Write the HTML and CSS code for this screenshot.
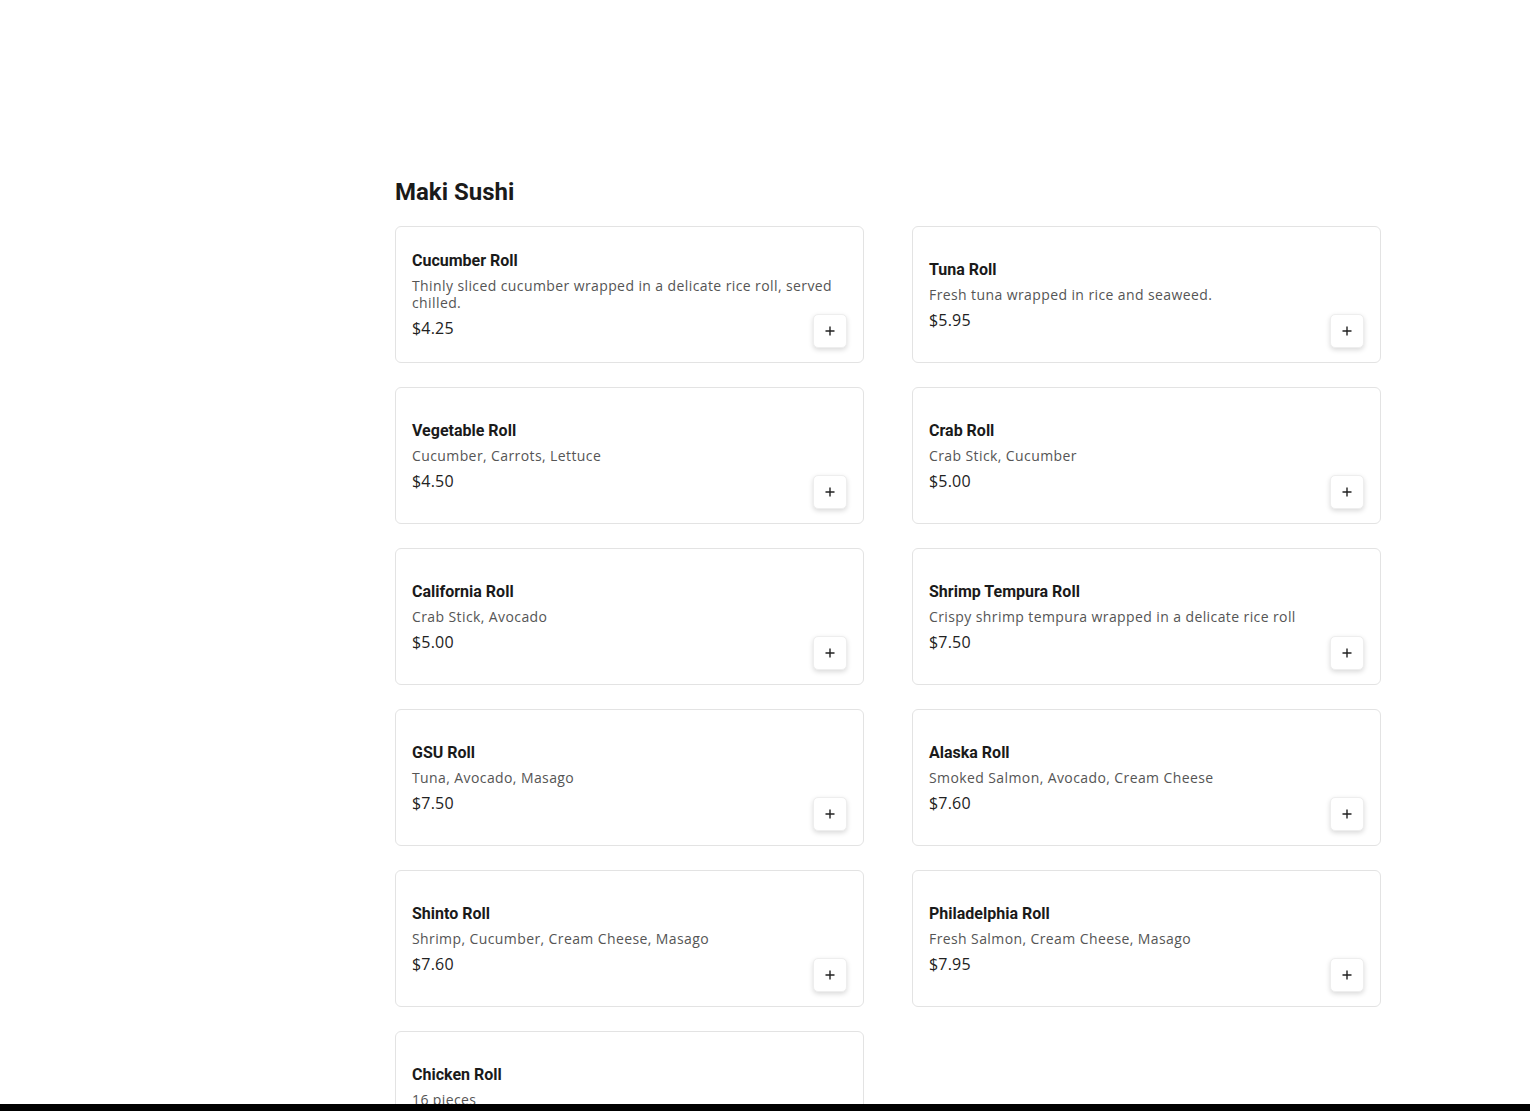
FILE: index.html
```html
<!DOCTYPE html>
<html lang="en">
  <head>
    <meta charset="UTF-8" />
    <meta name="viewport" content="width=device-width, initial-scale=1.0" />
    <title>Maki Sushi</title>
    <link rel="stylesheet" href="styles.css">
  </head>
  <body>
    <main class="menu">
      <section class="menu-section">
        <h2 class="section-title">Maki Sushi</h2>
        <div class="menu-grid">
          <div class="menu-item">
            <div class="item-info">
              <h3 class="item-name">Cucumber Roll</h3>
              <p class="item-desc">Thinly sliced cucumber wrapped in a delicate rice roll, served chilled.</p>
              <p class="item-price">$4.25</p>
            </div>
            <button class="add-btn" aria-label="Add">
              <svg viewBox="0 0 12 12" width="12" height="12"><path d="M6 1.5v9M1.5 6h9" /></svg>
            </button>
          </div>
          <div class="menu-item">
            <div class="item-info">
              <h3 class="item-name">Tuna Roll</h3>
              <p class="item-desc">Fresh tuna wrapped in rice and seaweed.</p>
              <p class="item-price">$5.95</p>
            </div>
            <button class="add-btn" aria-label="Add">
              <svg viewBox="0 0 12 12" width="12" height="12"><path d="M6 1.5v9M1.5 6h9" /></svg>
            </button>
          </div>
          <div class="menu-item">
            <div class="item-info">
              <h3 class="item-name">Vegetable Roll</h3>
              <p class="item-desc">Cucumber, Carrots, Lettuce</p>
              <p class="item-price">$4.50</p>
            </div>
            <button class="add-btn" aria-label="Add">
              <svg viewBox="0 0 12 12" width="12" height="12"><path d="M6 1.5v9M1.5 6h9" /></svg>
            </button>
          </div>
          <div class="menu-item">
            <div class="item-info">
              <h3 class="item-name">Crab Roll</h3>
              <p class="item-desc">Crab Stick, Cucumber</p>
              <p class="item-price">$5.00</p>
            </div>
            <button class="add-btn" aria-label="Add">
              <svg viewBox="0 0 12 12" width="12" height="12"><path d="M6 1.5v9M1.5 6h9" /></svg>
            </button>
          </div>
          <div class="menu-item">
            <div class="item-info">
              <h3 class="item-name">California Roll</h3>
              <p class="item-desc">Crab Stick, Avocado</p>
              <p class="item-price">$5.00</p>
            </div>
            <button class="add-btn" aria-label="Add">
              <svg viewBox="0 0 12 12" width="12" height="12"><path d="M6 1.5v9M1.5 6h9" /></svg>
            </button>
          </div>
          <div class="menu-item">
            <div class="item-info">
              <h3 class="item-name">Shrimp Tempura Roll</h3>
              <p class="item-desc">Crispy shrimp tempura wrapped in a delicate rice roll</p>
              <p class="item-price">$7.50</p>
            </div>
            <button class="add-btn" aria-label="Add">
              <svg viewBox="0 0 12 12" width="12" height="12"><path d="M6 1.5v9M1.5 6h9" /></svg>
            </button>
          </div>
          <div class="menu-item">
            <div class="item-info">
              <h3 class="item-name">GSU Roll</h3>
              <p class="item-desc">Tuna, Avocado, Masago</p>
              <p class="item-price">$7.50</p>
            </div>
            <button class="add-btn" aria-label="Add">
              <svg viewBox="0 0 12 12" width="12" height="12"><path d="M6 1.5v9M1.5 6h9" /></svg>
            </button>
          </div>
          <div class="menu-item">
            <div class="item-info">
              <h3 class="item-name">Alaska Roll</h3>
              <p class="item-desc">Smoked Salmon, Avocado, Cream Cheese</p>
              <p class="item-price">$7.60</p>
            </div>
            <button class="add-btn" aria-label="Add">
              <svg viewBox="0 0 12 12" width="12" height="12"><path d="M6 1.5v9M1.5 6h9" /></svg>
            </button>
          </div>
          <div class="menu-item">
            <div class="item-info">
              <h3 class="item-name">Shinto Roll</h3>
              <p class="item-desc">Shrimp, Cucumber, Cream Cheese, Masago</p>
              <p class="item-price">$7.60</p>
            </div>
            <button class="add-btn" aria-label="Add">
              <svg viewBox="0 0 12 12" width="12" height="12"><path d="M6 1.5v9M1.5 6h9" /></svg>
            </button>
          </div>
          <div class="menu-item">
            <div class="item-info">
              <h3 class="item-name">Philadelphia Roll</h3>
              <p class="item-desc">Fresh Salmon, Cream Cheese, Masago</p>
              <p class="item-price">$7.95</p>
            </div>
            <button class="add-btn" aria-label="Add">
              <svg viewBox="0 0 12 12" width="12" height="12"><path d="M6 1.5v9M1.5 6h9" /></svg>
            </button>
          </div>
          <div class="menu-item">
            <div class="item-info">
              <h3 class="item-name">Chicken Roll</h3>
              <p class="item-desc">16 pieces</p>
              <p class="item-price">$6.50</p>
            </div>
            <button class="add-btn" aria-label="Add">
              <svg viewBox="0 0 12 12" width="12" height="12"><path d="M6 1.5v9M1.5 6h9" /></svg>
            </button>
          </div>
        </div>
      </section>
    </main>
    <div class="bottom-bar"></div>
  </body>
</html>
```

FILE: styles.css
```css
body {
  margin: 0;
  background: #fff;
  font-family: Roboto, "Liberation Sans", sans-serif;
  color: #1a1a1a;
}

.menu {
  padding: 170px 149px 40px 395px;
}

.section-title {
  margin: 0 0 12px;
  font-size: 24px;
  line-height: 44px;
  font-weight: 700;
  color: #1a1a1a;
}

.menu-grid {
  display: grid;
  grid-template-columns: 1fr 1fr;
  column-gap: 48px;
  row-gap: 24px;
}

/* info and the add button share one cell: text centred, button in the corner */
.menu-item {
  display: grid;
  grid-template-areas: "stack";
  height: 137px;
  box-sizing: border-box;
  padding: 16px;
  border: 1px solid #e3e3e3;
  border-radius: 6px;
  background: #fff;
}

.item-info {
  grid-area: stack;
  align-self: center;
  margin-top: 1px;
}

.item-name {
  margin: 0;
  font-size: 16px;
  line-height: 20px;
  font-weight: 700;
  color: #1a1a1a;
}

.item-desc {
  margin: 6px 0 0;
  font-family: "Open Sans", sans-serif;
  font-size: 14px;
  line-height: 17px;
  letter-spacing: 0.4px;
  color: #555;
}

.item-price {
  margin: 6px 0 0;
  font-family: "Open Sans", sans-serif;
  font-size: 16px;
  line-height: 22px;
  letter-spacing: 0.2px;
  color: #222;
}

.add-btn {
  grid-area: stack;
  align-self: end;
  justify-self: end;
  display: flex;
  align-items: center;
  justify-content: center;
  width: 34px;
  height: 34px;
  margin-bottom: -2px;
  padding: 0;
  border: 1px solid #eee;
  border-radius: 5px;
  background: #fff;
  box-shadow: 0 2px 5px rgba(0, 0, 0, 0.15);
  cursor: pointer;
}

.add-btn svg {
  stroke: #222;
  stroke-width: 1.4;
  fill: none;
}

.bottom-bar {
  position: fixed;
  left: 0;
  right: 0;
  bottom: 0;
  height: 7px;
  background: #000;
}
```
